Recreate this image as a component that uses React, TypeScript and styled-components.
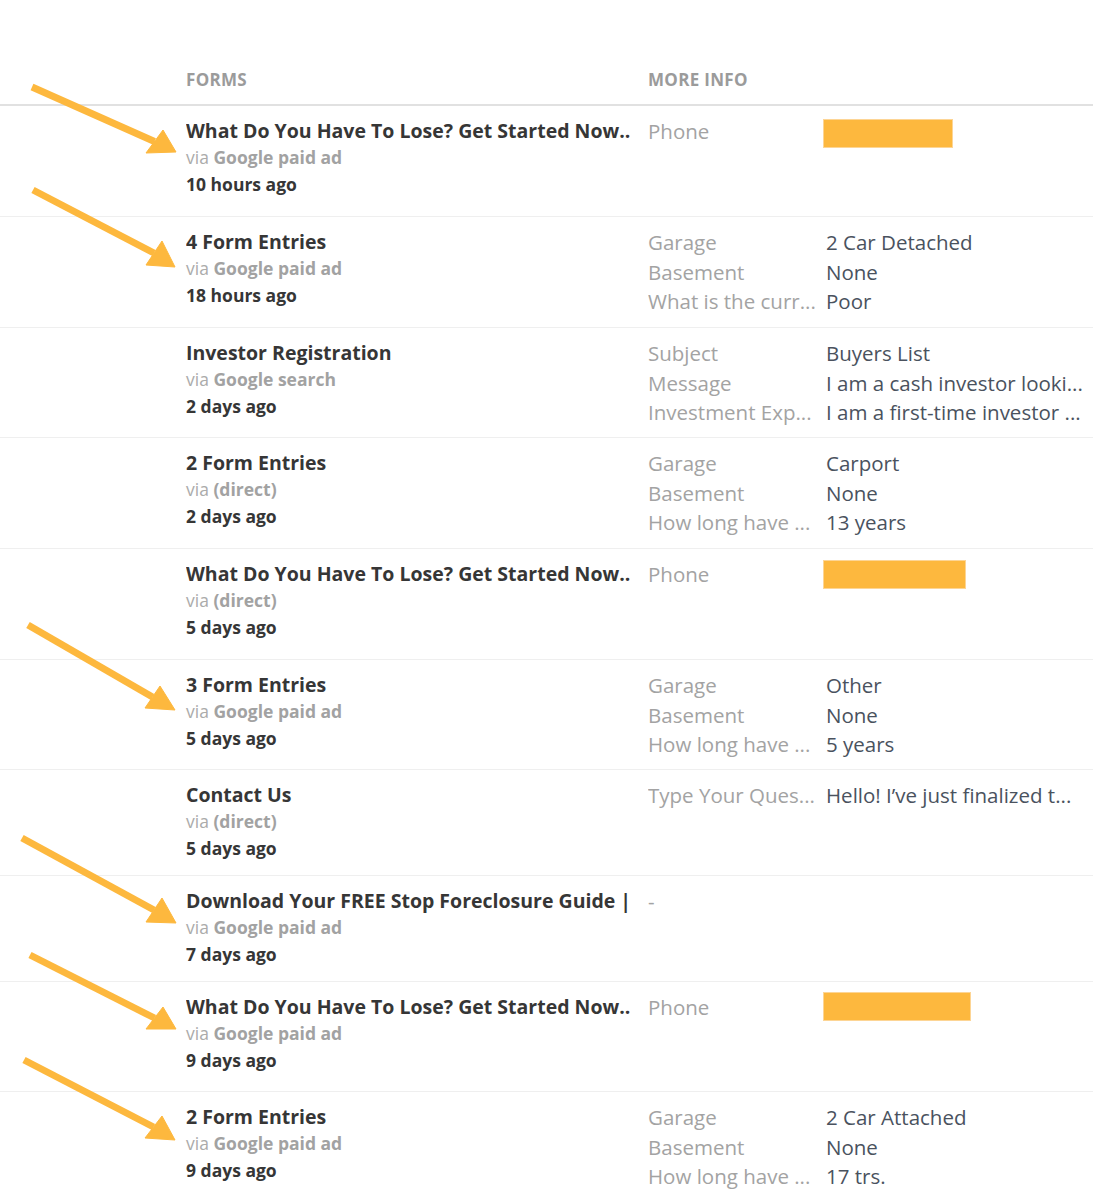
import React from "react";
import styled, { createGlobalStyle } from "styled-components";

const Global = createGlobalStyle`
  html, body { margin: 0; padding: 0; background: #ffffff; }
  body { font-family: "Open Sans", Lato, Arial, sans-serif; -webkit-font-smoothing: antialiased; }
`;

type Info = { label: string; value?: string; redact?: number; redactTop?: number };
type Entry = { title: string; source: string; time: string; h: number; info: Info[] };

const entries: Entry[] = [
  { title: "What Do You Have To Lose? Get Started Now..", source: "Google paid ad", time: "10 hours ago", h: 111, info: [{ label: "Phone", redact: 130, redactTop: 2 }] },
  { title: "4 Form Entries", source: "Google paid ad", time: "18 hours ago", h: 111, info: [
    { label: "Garage", value: "2 Car Detached" },
    { label: "Basement", value: "None" },
    { label: "What is the curr...", value: "Poor" },
  ] },
  { title: "Investor Registration", source: "Google search", time: "2 days ago", h: 110, info: [
    { label: "Subject", value: "Buyers List" },
    { label: "Message", value: "I am a cash investor looki..." },
    { label: "Investment Exp...", value: "I am a first-time investor ..." },
  ] },
  { title: "2 Form Entries", source: "(direct)", time: "2 days ago", h: 111, info: [
    { label: "Garage", value: "Carport" },
    { label: "Basement", value: "None" },
    { label: "How long have ...", value: "13 years" },
  ] },
  { title: "What Do You Have To Lose? Get Started Now..", source: "(direct)", time: "5 days ago", h: 111, info: [{ label: "Phone", redact: 143, redactTop: 0 }] },
  { title: "3 Form Entries", source: "Google paid ad", time: "5 days ago", h: 110, info: [
    { label: "Garage", value: "Other" },
    { label: "Basement", value: "None" },
    { label: "How long have ...", value: "5 years" },
  ] },
  { title: "Contact Us", source: "(direct)", time: "5 days ago", h: 106, info: [
    { label: "Type Your Ques...", value: "Hello! I\u2019ve just finalized t..." },
  ] },
  { title: "Download Your FREE Stop Foreclosure Guide |", source: "Google paid ad", time: "7 days ago", h: 106, info: [{ label: "-" }] },
  { title: "What Do You Have To Lose? Get Started Now..", source: "Google paid ad", time: "9 days ago", h: 110, info: [{ label: "Phone", redact: 148, redactTop: -1 }] },
  { title: "2 Form Entries", source: "Google paid ad", time: "9 days ago", h: 111, info: [
    { label: "Garage", value: "2 Car Attached" },
    { label: "Basement", value: "None" },
    { label: "How long have ...", value: "17 trs." },
  ] },
];

type Arrow = { s: [number, number]; t: [number, number]; c1: [number, number]; c2: [number, number] };
const arrows: Arrow[] = [
  { s: [32, 87], t: [176, 152], c1: [146, 153], c2: [163, 130] },
  { s: [33, 190], t: [175, 267], c1: [146, 265], c2: [162, 241] },
  { s: [28, 625], t: [175, 710], c1: [145, 708], c2: [160, 686] },
  { s: [22, 838], t: [176, 923], c1: [146, 922], c2: [162, 898] },
  { s: [30, 955], t: [176, 1029], c1: [146, 1029], c2: [163, 1007] },
  { s: [24, 1060], t: [175, 1140], c1: [145, 1138], c2: [162, 1116] },
];

const Page = styled.div`
  position: relative;
  width: 1093px;
  min-height: 1200px;
  background: #fff;
`;

const Table = styled.div`
  display: flex;
  flex-direction: column;
`;

const HeaderRow = styled.div`
  display: grid;
  grid-template-columns: 186px 462px 1fr;
  height: 106px;
  box-sizing: border-box;
  align-items: end;
  padding-bottom: 14px;
  border-bottom: 2px solid #e1e1e1;
`;

const HeaderCell = styled.div`
  font-size: 17px;
  line-height: 20px;
  font-weight: 700;
  color: #9b9b9b;
  letter-spacing: 0.3px;
  text-transform: uppercase;
`;

const Row = styled.div<{ $h: number }>`
  display: grid;
  grid-template-columns: 186px 462px 1fr;
  height: ${(p) => p.$h}px;
  box-sizing: border-box;
  padding-top: 11px;
  border-bottom: 1px solid #efefef;
`;

const FormCell = styled.div`
  display: flex;
  flex-direction: column;
  padding-right: 14px;
  min-width: 0;
`;

const Title = styled.div`
  font-size: 19.5px;
  line-height: 27px;
  font-weight: 700;
  color: #363636;
  white-space: nowrap;
  overflow: hidden;
`;

const Via = styled.div`
  font-size: 17.5px;
  line-height: 27px;
  color: #ababab;
  white-space: nowrap;
`;

const Source = styled.span`
  font-weight: 700;
  color: #a2a2a2;
`;

const Time = styled.div`
  font-size: 17.5px;
  line-height: 27px;
  font-weight: 700;
  color: #363636;
`;

const InfoGrid = styled.div`
  display: grid;
  grid-template-columns: 178px 1fr;
  align-content: start;
  min-width: 0;
`;

const Label = styled.div`
  font-size: 20.5px;
  line-height: 29.5px;
  color: #a3a3a3;
  white-space: nowrap;
  overflow: hidden;
  padding-right: 6px;
`;

const Value = styled.div`
  font-size: 20.5px;
  line-height: 29.5px;
  color: #4a525e;
  white-space: nowrap;
  overflow: hidden;
`;

const RedactCell = styled.div`
  min-width: 0;
`;

const Redact = styled.div<{ $w: number; $top: number }>`
  width: ${(p) => p.$w}px;
  height: 29px;
  margin-left: -3px;
  margin-top: ${(p) => p.$top}px;
  background: #fdb83e;
  border: 1px solid #fdd595;
  box-sizing: border-box;
`;

const Overlay = styled.svg`
  position: absolute;
  left: 0;
  top: 0;
  pointer-events: none;
`;

export default function App() {
  return (
    <Page>
      <Global />
      <Table>
        <HeaderRow>
          <div />
          <HeaderCell>Forms</HeaderCell>
          <HeaderCell>More Info</HeaderCell>
        </HeaderRow>
        {entries.map((e, i) => (
          <Row key={i} $h={e.h}>
            <div />
            <FormCell>
              <Title>{e.title}</Title>
              <Via>
                via <Source>{e.source}</Source>
              </Via>
              <Time>{e.time}</Time>
            </FormCell>
            <InfoGrid>
              {e.info.map((f, j) => (
                <React.Fragment key={j}>
                  <Label>{f.label}</Label>
                  {f.redact ? (
                    <RedactCell>
                      <Redact $w={f.redact} $top={f.redactTop ?? 0} />
                    </RedactCell>
                  ) : (
                    <Value>{f.value ?? ""}</Value>
                  )}
                </React.Fragment>
              ))}
            </InfoGrid>
          </Row>
        ))}
      </Table>
      <Overlay width="1110" height="1200" viewBox="0 0 1110 1200">
        {arrows.map((a, i) => {
          const mx = (a.c1[0] + a.c2[0]) / 2;
          const my = (a.c1[1] + a.c2[1]) / 2;
          return (
            <g key={i} fill="#fdb83e" stroke="#fdb83e">
              <line x1={a.s[0]} y1={a.s[1]} x2={mx} y2={my} strokeWidth={7} />
              <polygon points={`${a.t[0]},${a.t[1]} ${a.c1[0]},${a.c1[1]} ${a.c2[0]},${a.c2[1]}`} strokeWidth={1} strokeLinejoin="round" />
            </g>
          );
        })}
      </Overlay>
    </Page>
  );
}
